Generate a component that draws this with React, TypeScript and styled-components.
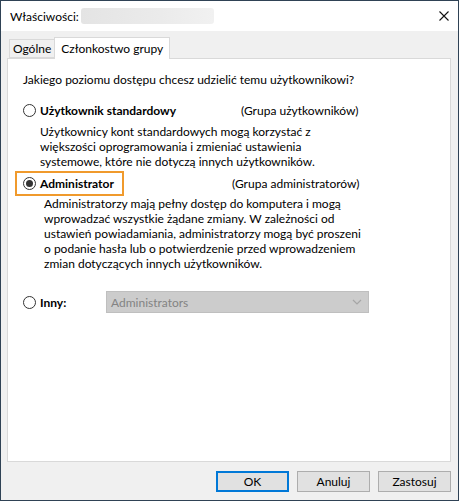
import React from "react";
import styled, { createGlobalStyle } from "styled-components";

const Global = createGlobalStyle`
  html, body { margin: 0; padding: 0; background: #ffffff; }
  body { font-family: Lato, "Noto Sans", sans-serif; font-size: 12px; color: #000; }
  * { box-sizing: border-box; }
`;

const Window = styled.div`
  width: 459px;
  height: 501px;
  border: 1px solid #2f4255;
  display: flex;
  flex-direction: column;
  background: #f0f0f0;
`;

const TitleBar = styled.div`
  height: 30px;
  background: #ffffff;
  display: flex;
  align-items: center;
  padding-left: 9px;
  padding-right: 9px;
  gap: 2px;
`;

const TitleText = styled.span`
  line-height: 15px;
`;

const Blur = styled.span`
  width: 133px;
  height: 16px;
  border-radius: 3px;
  background: linear-gradient(90deg, #e4e4e4, #ebebeb 60%, #f1f1f1);
`;

const CloseBtn = styled.span`
  margin-left: auto;
  width: 10px;
  height: 10px;
  display: flex;
`;

const Body = styled.div`
  flex: 1;
  display: flex;
  flex-direction: column;
  padding: 6px 7px 8px 6px;
`;

const TabStrip = styled.div`
  display: flex;
  align-items: flex-end;
  height: 21px;
  padding-left: 2px;
`;

const Tab = styled.div<{ $active?: boolean }>`
  height: ${(p) => (p.$active ? "22px" : "19px")};
  padding: 0 ${(p) => (p.$active ? "6px" : "3px")};
  display: flex;
  align-items: center;
  background: ${(p) => (p.$active ? "#ffffff" : "#f0f0f0")};
  border: 1px solid #d9d9d9;
  border-bottom: ${(p) => (p.$active ? "none" : "1px solid #d9d9d9")};
  margin-right: ${(p) => (p.$active ? "0" : "-1px")};
  margin-bottom: ${(p) => (p.$active ? "-1px" : "0")};
  position: relative;
  z-index: ${(p) => (p.$active ? 2 : 1)};
  line-height: 15px;
`;

const Panel = styled.div`
  flex: 1;
  background: #ffffff;
  border: 1px solid #d9d9d9;
  padding: 13px 0 0 15px;
  display: flex;
  flex-direction: column;
`;

const Line = styled.div`
  line-height: 15px;
  white-space: nowrap;
`;

const OptionRow = styled.div<{ $mt: number; $h?: number }>`
  display: flex;
  align-items: center;
  margin-top: ${(p) => p.$mt}px;
  height: ${(p) => p.$h ?? 15}px;
`;

const RadioLabel = styled.div<{ $highlight?: boolean }>`
  display: flex;
  align-items: center;
  gap: 4px;
  position: relative;
  &::after {
    content: "";
    display: ${(p) => (p.$highlight ? "block" : "none")};
    position: absolute;
    left: -8px;
    right: -10px;
    top: -5px;
    bottom: -5px;
    border: 2px solid #f09a2c;
  }
`;

const Radio = styled.span<{ $checked?: boolean }>`
  width: 13px;
  height: 13px;
  flex: none;
  border: 1px solid #333333;
  border-radius: 50%;
  background: #ffffff;
  display: flex;
  align-items: center;
  justify-content: center;
  &::before {
    content: "";
    display: ${(p) => (p.$checked ? "block" : "none")};
    width: 7px;
    height: 7px;
    border-radius: 50%;
    background: #333333;
  }
`;

const Bold = styled.span`
  font-weight: 700;
  line-height: 15px;
  white-space: nowrap;
`;

const GroupNote = styled.span<{ $left: number }>`
  position: absolute;
  left: ${(p) => p.$left}px;
  line-height: 15px;
  white-space: nowrap;
`;

const RowWrap = styled.div`
  position: relative;
  display: flex;
  align-items: center;
`;

const Desc = styled.div<{ $mt: number; $ml: number }>`
  margin-top: ${(p) => p.$mt}px;
  margin-left: ${(p) => p.$ml}px;
  display: flex;
  flex-direction: column;
`;

const InnyLabel = styled.div`
  width: 66px;
`;

const Select = styled.div`
  width: 263px;
  height: 22px;
  background: #cccccc;
  border: 1px solid #bfbfbf;
  display: flex;
  align-items: center;
  padding: 0 6px 0 4px;
  color: #838383;
  line-height: 15px;
`;

const Chevron = styled.span`
  margin-left: auto;
  display: flex;
`;

const ButtonRow = styled.div`
  display: flex;
  justify-content: flex-end;
  gap: 8px;
  margin-top: 9px;
`;

const Button = styled.div<{ $default?: boolean }>`
  width: 73px;
  height: 21px;
  background: #e1e1e1;
  border: ${(p) => (p.$default ? "2px solid #0078d7" : "1px solid #adadad")};
  display: flex;
  align-items: center;
  justify-content: center;
  line-height: 15px;
`;

export default function App() {
  return (
    <>
      <Global />
      <Window>
        <TitleBar>
          <TitleText>Właściwości:</TitleText>
          <Blur />
          <CloseBtn>
            <svg width="10" height="10" viewBox="0 0 10 10">
              <path d="M0.5 0.5 L9.5 9.5 M9.5 0.5 L0.5 9.5" stroke="#111" strokeWidth="1.1" />
            </svg>
          </CloseBtn>
        </TitleBar>
        <Body>
          <TabStrip>
            <Tab>Ogólne</Tab>
            <Tab $active>Członkostwo grupy</Tab>
          </TabStrip>
          <Panel>
            <Line>Jakiego poziomu dostępu chcesz udzielić temu użytkownikowi?</Line>

            <OptionRow $mt={16}>
              <RowWrap>
                <RadioLabel>
                  <Radio />
                  <Bold>Użytkownik standardowy</Bold>
                </RadioLabel>
                <GroupNote $left={218}>(Grupa użytkowników)</GroupNote>
              </RowWrap>
            </OptionRow>
            <Desc $mt={6} $ml={17}>
              <Line>Użytkownicy kont standardowych mogą korzystać z</Line>
              <Line>większości oprogramowania i zmieniać ustawienia</Line>
              <Line>systemowe, które nie dotyczą innych użytkowników.</Line>
            </Desc>

            <OptionRow $mt={7}>
              <RowWrap>
                <RadioLabel $highlight>
                  <Radio $checked />
                  <Bold>Administrator</Bold>
                </RadioLabel>
                <GroupNote $left={209}>(Grupa administratorów)</GroupNote>
              </RowWrap>
            </OptionRow>
            <Desc $mt={5} $ml={21}>
              <Line>Administratorzy mają pełny dostęp do komputera i mogą</Line>
              <Line>wprowadzać wszystkie żądane zmiany. W zależności od</Line>
              <Line>ustawień powiadamiania, administratorzy mogą być proszeni</Line>
              <Line>o podanie hasła lub o potwierdzenie przed wprowadzeniem</Line>
              <Line>zmian dotyczących innych użytkowników.</Line>
            </Desc>

            <OptionRow $mt={20} $h={22}>
              <RadioLabel>
                <Radio />
                <InnyLabel>
                  <Bold>Inny:</Bold>
                </InnyLabel>
              </RadioLabel>
              <Select>
                Administrators
                <Chevron>
                  <svg width="10" height="6" viewBox="0 0 10 6">
                    <path d="M1 1 L5 5 L9 1" fill="none" stroke="#a6a6a6" strokeWidth="1.2" />
                  </svg>
                </Chevron>
              </Select>
            </OptionRow>
          </Panel>
          <ButtonRow>
            <Button $default>OK</Button>
            <Button>Anuluj</Button>
            <Button>Zastosuj</Button>
          </ButtonRow>
        </Body>
      </Window>
    </>
  );
}
